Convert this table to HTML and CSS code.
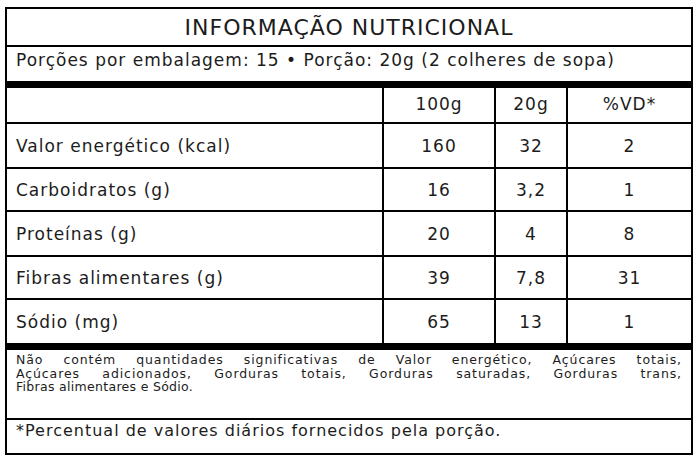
FILE: index.html
```
<!DOCTYPE html>
<html lang="pt">
<head>
<meta charset="utf-8">
<link rel="stylesheet" href="styles.css">
</head>
<body>
<div class="label">
  <div class="title">INFORMAÇÃO NUTRICIONAL</div>
  <div class="serving">Porções por embalagem: 15 • Porção: 20g (2 colheres de sopa)</div>
  <div class="thick"></div>
  <div class="table">
    <div class="row head">
      <div class="cell name"></div>
      <div class="cell num">100g</div>
      <div class="cell num">20g</div>
      <div class="cell num">%VD*</div>
    </div>
    <div class="row tall">
      <div class="cell name">Valor energético (kcal)</div>
      <div class="cell num">160</div>
      <div class="cell num">32</div>
      <div class="cell num">2</div>
    </div>
    <div class="row">
      <div class="cell name">Carboidratos (g)</div>
      <div class="cell num">16</div>
      <div class="cell num">3,2</div>
      <div class="cell num">1</div>
    </div>
    <div class="row tall">
      <div class="cell name">Proteínas (g)</div>
      <div class="cell num">20</div>
      <div class="cell num">4</div>
      <div class="cell num">8</div>
    </div>
    <div class="row">
      <div class="cell name">Fibras alimentares (g)</div>
      <div class="cell num">39</div>
      <div class="cell num">7,8</div>
      <div class="cell num">31</div>
    </div>
    <div class="row last">
      <div class="cell name">Sódio (mg)</div>
      <div class="cell num">65</div>
      <div class="cell num">13</div>
      <div class="cell num">1</div>
    </div>
  </div>
  <div class="thick"></div>
  <div class="note">
    <span class="jline">Não contém quantidades significativas de Valor energético, Açúcares totais,</span>
    <span class="jline">Açúcares adicionados, Gorduras totais, Gorduras saturadas, Gorduras trans,</span>
    <span class="line">Fibras alimentares e Sódio.</span>
  </div>
  <div class="vd">*Percentual de valores diários fornecidos pela porção.</div>
</div>
</body>
</html>
```
FILE: styles.css
```
* { box-sizing: border-box; }
html, body { margin: 0; padding: 0; background: #ffffff; }
body {
  padding: 7px 4px 0 5px;
  font-family: "DejaVu Sans", sans-serif;
  color: #1c1c1c;
}
.label {
  width: 688px;
  border: 2px solid #000;
  display: flex;
  flex-direction: column;
}
.title {
  height: 38px;
  border-bottom: 2px solid #000;
  text-align: center;
  font-size: 22px;
  letter-spacing: 1px;
  line-height: 37px;
}
.serving {
  height: 34px;
  padding-left: 9px;
  font-size: 17px;
  letter-spacing: 1px;
  line-height: 27px;
}
.thick {
  height: 7px;
  background: #000;
}
.table {
  display: flex;
  flex-direction: column;
}
.row {
  display: grid;
  grid-template-columns: 375px 112px 72px 125px;
  height: 43px;
  border-bottom: 2px solid #000;
}
.row.tall { height: 45px; }
.row.head { height: 36px; }
.row.last { border-bottom: none; height: 43px; }
.cell {
  display: flex;
  align-items: center;
  font-size: 17px;
  letter-spacing: 1px;
}
.cell.name { padding-left: 9px; }
.cell.num {
  border-left: 2px solid #000;
  justify-content: center;
}
.row.head .cell { padding-bottom: 3px; }
.note {
  height: 70px;
  border-bottom: 2px solid #000;
  padding: 3px 9px 0 9px;
  font-size: 12.5px;
  letter-spacing: 0.3px;
  line-height: 13.5px;
}
.note span { display: block; }
.note .jline {
  text-align: justify;
  text-align-last: justify;
  letter-spacing: 0.9px;
}
.vd {
  height: 33px;
  padding-left: 9px;
  font-size: 16px;
  letter-spacing: 1px;
  line-height: 20px;
  padding-top: 1px;
}
```
